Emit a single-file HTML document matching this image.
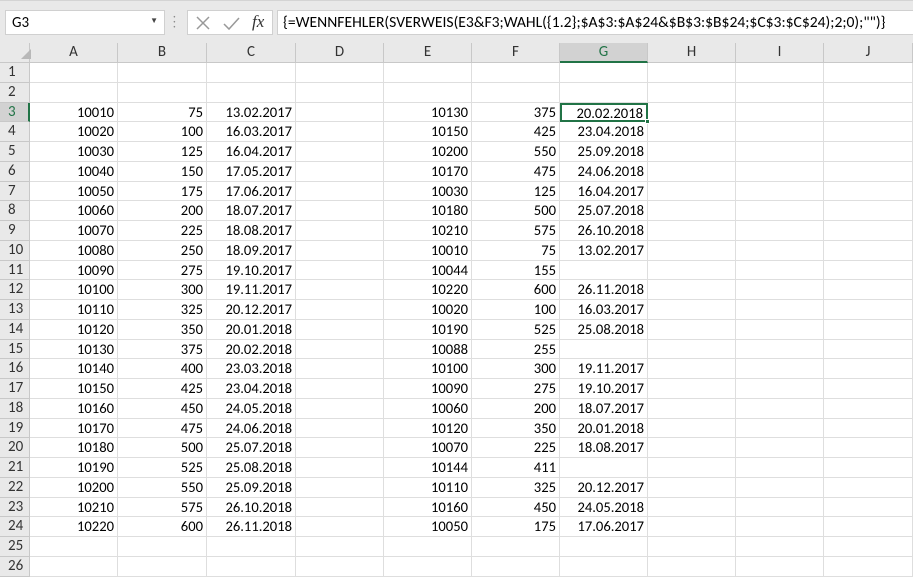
<!DOCTYPE html>
<html><head><meta charset="utf-8"><style>
*{box-sizing:border-box;margin:0;padding:0}
body{width:913px;height:573px;overflow:hidden;background:#fff;font-family:Calibri,"Liberation Sans",sans-serif;font-size:14.6px;color:#000;position:relative}
#top{position:absolute;left:0;top:0;width:913px;height:43px;background:#e9e9e9;border-top:1px solid #d4d4d4}
.box{position:absolute;background:#fff;border:1px solid #d0d0d0;top:9px;height:25px}
#grid{position:absolute;left:0;top:43px;display:grid;grid-template-columns:30px 88px 89px 89px 88px 88px 88px 88px 88px 88px 89px;grid-template-rows:20px repeat(26,19.75px)}
#grid div{border-right:1px solid #dedede;border-bottom:1px solid #dedede;white-space:nowrap;overflow:visible;line-height:19px;padding:0 3px;text-align:right}
#grid .h{background:#e9e9e9;border-color:#c8c8c8;text-align:center;color:#333;font-size:15px}
#grid .r{background:#e9e9e9;border-color:#c8c8c8;text-align:left;padding-left:8px;color:#333;font-size:15px}
#grid .sel{background:#d2d2d2;color:#217346;border-bottom:2px solid #217346}
#grid .rs{background:#d2d2d2;color:#217346;border-right:2px solid #217346}
</style></head><body>
<div id="top">
<div class="box" style="left:5px;width:160px;padding:3px 6px;font-size:15px">G3<span style="position:absolute;right:6px;top:5px;font-size:8px;color:#444">▼</span></div>
<div style="position:absolute;left:173px;top:13px;color:#888;font-size:11px;line-height:5px">·<br>·<br>·</div>
<div class="box" style="left:187px;width:86px">
<svg width="86" height="25" style="position:absolute;left:0;top:0"><path d="M9 6 L21 18 M21 6 L9 18" stroke="#999" stroke-width="1.5" fill="none"/><path d="M36 13 L41 18 L51 7" stroke="#999" stroke-width="1.5" fill="none"/></svg>
<span style="position:absolute;left:64px;top:1px;font-family:'Liberation Serif',serif;font-style:italic;font-size:17px;color:#333">fx</span></div>
<div class="box" style="left:277px;width:640px;padding:2px 5px;font-size:15.6px">{=WENNFEHLER(SVERWEIS(E3&amp;F3;WAHL({1.2};$A$3:$A$24&amp;$B$3:$B$24;$C$3:$C$24);2;0);"")}</div>
</div>
<div id="grid">
<div class="h"><svg width="14" height="14" style="position:absolute;margin:4px 0 0 4px"><path d="M12 2 L12 12 L2 12Z" fill="#b8b8b8"/></svg></div><div class="h">A</div><div class="h">B</div><div class="h">C</div><div class="h">D</div><div class="h">E</div><div class="h">F</div><div class="h sel">G</div><div class="h">H</div><div class="h">I</div><div class="h">J</div>
<div class="r">1</div><div></div><div></div><div></div><div></div><div></div><div></div><div></div><div></div><div></div><div></div>
<div class="r">2</div><div></div><div></div><div></div><div></div><div></div><div></div><div></div><div></div><div></div><div></div>
<div class="r rs">3</div><div>10010</div><div>75</div><div>13.02.2017</div><div></div><div>10130</div><div>375</div><div style="border:2px solid #217346;position:relative;line-height:16px">20.02.2018<span style="position:absolute;right:-4px;bottom:-4px;width:5px;height:5px;background:#217346;border:1px solid #fff"></span></div><div></div><div></div><div></div>
<div class="r">4</div><div>10020</div><div>100</div><div>16.03.2017</div><div></div><div>10150</div><div>425</div><div>23.04.2018</div><div></div><div></div><div></div>
<div class="r">5</div><div>10030</div><div>125</div><div>16.04.2017</div><div></div><div>10200</div><div>550</div><div>25.09.2018</div><div></div><div></div><div></div>
<div class="r">6</div><div>10040</div><div>150</div><div>17.05.2017</div><div></div><div>10170</div><div>475</div><div>24.06.2018</div><div></div><div></div><div></div>
<div class="r">7</div><div>10050</div><div>175</div><div>17.06.2017</div><div></div><div>10030</div><div>125</div><div>16.04.2017</div><div></div><div></div><div></div>
<div class="r">8</div><div>10060</div><div>200</div><div>18.07.2017</div><div></div><div>10180</div><div>500</div><div>25.07.2018</div><div></div><div></div><div></div>
<div class="r">9</div><div>10070</div><div>225</div><div>18.08.2017</div><div></div><div>10210</div><div>575</div><div>26.10.2018</div><div></div><div></div><div></div>
<div class="r">10</div><div>10080</div><div>250</div><div>18.09.2017</div><div></div><div>10010</div><div>75</div><div>13.02.2017</div><div></div><div></div><div></div>
<div class="r">11</div><div>10090</div><div>275</div><div>19.10.2017</div><div></div><div>10044</div><div>155</div><div></div><div></div><div></div><div></div>
<div class="r">12</div><div>10100</div><div>300</div><div>19.11.2017</div><div></div><div>10220</div><div>600</div><div>26.11.2018</div><div></div><div></div><div></div>
<div class="r">13</div><div>10110</div><div>325</div><div>20.12.2017</div><div></div><div>10020</div><div>100</div><div>16.03.2017</div><div></div><div></div><div></div>
<div class="r">14</div><div>10120</div><div>350</div><div>20.01.2018</div><div></div><div>10190</div><div>525</div><div>25.08.2018</div><div></div><div></div><div></div>
<div class="r">15</div><div>10130</div><div>375</div><div>20.02.2018</div><div></div><div>10088</div><div>255</div><div></div><div></div><div></div><div></div>
<div class="r">16</div><div>10140</div><div>400</div><div>23.03.2018</div><div></div><div>10100</div><div>300</div><div>19.11.2017</div><div></div><div></div><div></div>
<div class="r">17</div><div>10150</div><div>425</div><div>23.04.2018</div><div></div><div>10090</div><div>275</div><div>19.10.2017</div><div></div><div></div><div></div>
<div class="r">18</div><div>10160</div><div>450</div><div>24.05.2018</div><div></div><div>10060</div><div>200</div><div>18.07.2017</div><div></div><div></div><div></div>
<div class="r">19</div><div>10170</div><div>475</div><div>24.06.2018</div><div></div><div>10120</div><div>350</div><div>20.01.2018</div><div></div><div></div><div></div>
<div class="r">20</div><div>10180</div><div>500</div><div>25.07.2018</div><div></div><div>10070</div><div>225</div><div>18.08.2017</div><div></div><div></div><div></div>
<div class="r">21</div><div>10190</div><div>525</div><div>25.08.2018</div><div></div><div>10144</div><div>411</div><div></div><div></div><div></div><div></div>
<div class="r">22</div><div>10200</div><div>550</div><div>25.09.2018</div><div></div><div>10110</div><div>325</div><div>20.12.2017</div><div></div><div></div><div></div>
<div class="r">23</div><div>10210</div><div>575</div><div>26.10.2018</div><div></div><div>10160</div><div>450</div><div>24.05.2018</div><div></div><div></div><div></div>
<div class="r">24</div><div>10220</div><div>600</div><div>26.11.2018</div><div></div><div>10050</div><div>175</div><div>17.06.2017</div><div></div><div></div><div></div>
<div class="r">25</div><div></div><div></div><div></div><div></div><div></div><div></div><div></div><div></div><div></div><div></div>
<div class="r">26</div><div></div><div></div><div></div><div></div><div></div><div></div><div></div><div></div><div></div><div></div>
</div>
</body></html>
